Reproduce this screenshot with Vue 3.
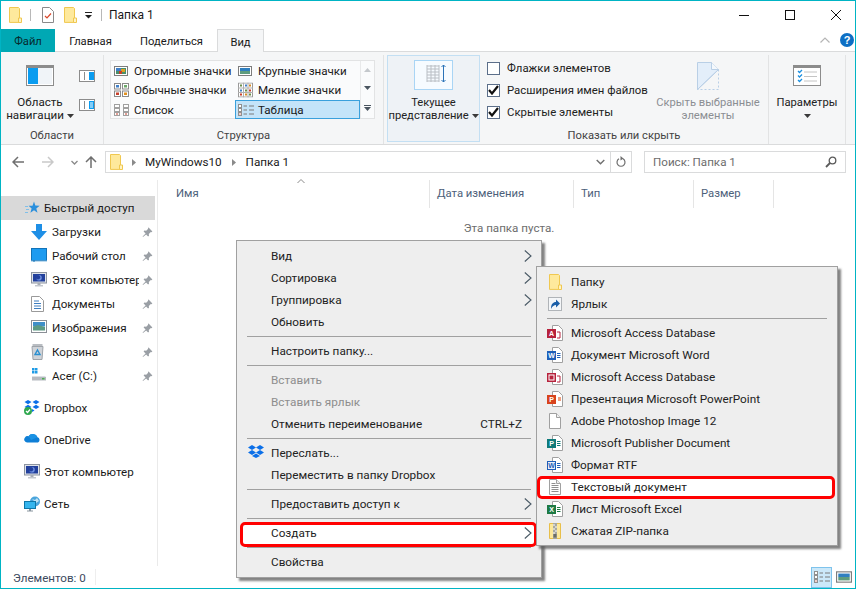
<template>
  <div class="window">
    <!-- набор иконок -->
    <svg class="defs" width="0" height="0">
      <symbol id="folder" viewBox="0 0 13 16">
        <path d="M.5.5h9l1 1v13.900H.5z" fill="#fee99c" stroke="#f0c850"/>
        <path d="M9.500 11h3v4.500h-3z" fill="#fff3c4" stroke="#f0c850"/>
      </symbol>
      <symbol id="pin" viewBox="0 0 11 11">
        <path d="M6.600.6l3.800 3.800-1 .8-.6-.3-2 2 .2 1.900-.9.700-2-2L1 10l-.4-.4 3-3.200-2-2 .8-.9 1.800.2 2-2-.3-.6z" fill="#9a9fa5"/>
      </symbol>
      <symbol id="v-huge" viewBox="0 0 14 10">
        <rect x=".5" y=".5" width="13" height="9" fill="#fff" stroke="#7d7d7d"/>
        <rect x="2" y="2" width="10" height="6" fill="#4a8f6a"/>
        <rect x="2" y="2" width="5" height="3" fill="#3f7fc8"/>
        <rect x="7" y="3" width="4" height="3" fill="#e0a020"/>
        <rect x="5" y="5" width="3" height="3" fill="#c8402c"/>
      </symbol>
      <symbol id="v-large" viewBox="0 0 14 10">
        <rect x=".5" y=".5" width="13" height="9" fill="#fff" stroke="#7d7d7d"/>
        <rect x="2" y="2" width="10" height="3" fill="#2f7fc0"/>
        <rect x="2" y="5" width="10" height="3" fill="#5e9c7e"/>
      </symbol>
      <symbol id="v-medium" viewBox="0 0 15 14">
        <g fill="#fff" stroke="#8a8a8a"><rect x=".5" y=".5" width="6" height="5.500"/><rect x="8.500" y=".5" width="6" height="5.500"/><rect x=".5" y="8" width="6" height="5.500"/><rect x="8.500" y="8" width="6" height="5.500"/></g>
        <rect x="2" y="2" width="3" height="2.500" fill="#3f7fc8"/><rect x="10" y="2" width="3" height="2.500" fill="#6ba86a"/><rect x="2" y="9.500" width="3" height="2.500" fill="#c8402c"/><rect x="10" y="9.500" width="3" height="2.500" fill="#e09020"/>
      </symbol>
      <symbol id="v-small" viewBox="0 0 15 15">
        <rect x=".5" y=".5" width="14" height="14" fill="#fff" stroke="#9a9a9a"/>
        <path d="M5.500 0v15M10 0v15M0 5.500h15M0 10h15" stroke="#b0b0b0"/>
        <g fill="#6a8f4a"><rect x="2" y="2" width="2" height="2"/><rect x="7" y="7" width="2" height="2"/><rect x="11" y="11" width="2" height="2"/></g>
        <g fill="#3f7fc8"><rect x="7" y="2" width="2" height="2"/><rect x="2" y="7" width="2" height="2"/></g>
        <g fill="#d88a20"><rect x="11" y="2" width="2" height="2"/><rect x="7" y="11" width="2" height="2"/></g>
        <g fill="#c8402c"><rect x="2" y="11" width="2" height="2"/><rect x="11" y="7" width="2" height="2"/></g>
      </symbol>
      <symbol id="v-list" viewBox="0 0 15 12">
        <g fill="#fff" stroke="#a0a0a0"><rect x=".5" y=".5" width="5" height="3"/><rect x=".5" y="4.500" width="5" height="3"/><rect x=".5" y="8.500" width="5" height="3"/><rect x="9.500" y=".5" width="5" height="3"/><rect x="9.500" y="4.500" width="5" height="3"/><rect x="9.500" y="8.500" width="5" height="3"/></g>
        <rect x="2" y="9.500" width="2" height="1" fill="#c8402c"/><rect x="11" y="9.500" width="2" height="1" fill="#c8402c"/>
      </symbol>
      <symbol id="v-table" viewBox="0 0 16 12">
        <g fill="#fff" stroke="#909090"><rect x=".5" y=".5" width="3" height="3"/><rect x=".5" y="4.500" width="3" height="3"/><rect x=".5" y="8.500" width="3" height="3"/></g>
        <path d="M5.500 2H9M11 2h5M5.500 6H9M11 6h5M5.500 10H9M11 10h5" stroke="#7a7a7a"/>
        <rect x="1.500" y="9.500" width="1" height="1" fill="#c8402c"/>
      </symbol>
      <symbol id="star" viewBox="0 0 15 14">
        <path d="M9 .5l1.300 4 4.400.2-3.400 2.700 1.200 4.300L9 9.300l-3.600 2.400 1.200-4.300-3-2.700h3.900z" fill="#2a8fdc"/>
        <path d="M0 5.500h3M1 8.500h3M0 11.500h3" stroke="#7fbfe8"/>
      </symbol>
      <symbol id="down" viewBox="0 0 16 16">
        <path d="M5 0h6v7h5l-8 9-8-9h5z" fill="#1e8fe6"/>
      </symbol>
      <symbol id="desktop" viewBox="0 0 16 14">
        <rect x=".5" y=".5" width="15" height="12" fill="#1d9bf0" stroke="#1273b8"/>
        <path d="M0 13h16" stroke="#7fb8e0"/><path d="M2 13h2" stroke="#1273b8"/>
      </symbol>
      <symbol id="pc" viewBox="0 0 16 15">
        <rect x=".5" y=".5" width="15" height="10.500" fill="#dfe3ea" stroke="#8d94a0"/>
        <rect x="2" y="2" width="12" height="7.500" fill="#22409c"/>
        <circle cx="8" cy="5.700" r="2.800" fill="#6f8fe0"/><circle cx="7" cy="5.300" r="2.200" fill="#22409c"/>
        <path d="M6.500 11h3v2h-3z" fill="#a8adb5"/><path d="M4 13h8v1.500H4z" fill="#c4c8ce"/>
      </symbol>
      <symbol id="docs" viewBox="0 0 13 16">
        <path d="M.5.5h8l4 4v11H.5z" fill="#fff" stroke="#9a9a9a"/>
        <path d="M3 5h5M3 7.500h7M3 10h7M3 12.500h7" stroke="#3f7fc0"/>
      </symbol>
      <symbol id="pics" viewBox="0 0 16 13">
        <rect x=".5" y=".5" width="15" height="12" fill="#fff" stroke="#8a8f96"/>
        <rect x="2" y="2" width="12" height="4.500" fill="#3f8fc8"/>
        <path d="M2 6.500l5-1.500 7 2v3.500H2z" fill="#5c9a84"/>
      </symbol>
      <symbol id="bin" viewBox="0 0 13 16">
        <path d="M1 2.500h11L11 15.500H2z" fill="#cfd3d8" stroke="#9ea3a9"/>
        <path d="M1.500 1h10" stroke="#b9bdc2" stroke-width="2"/>
        <path d="M6.500 6l2.500 4.500H4z" fill="none" stroke="#2a8fd0" stroke-width="1.400"/>
      </symbol>
      <symbol id="drive" viewBox="0 0 16 14">
        <g fill="#1e9be6"><rect x="1" y="0" width="2.500" height="2.500"/><rect x="4" y="0" width="2.500" height="2.500"/><rect x="1" y="3" width="2.500" height="2.500"/><rect x="4" y="3" width="2.500" height="2.500"/></g>
        <path d="M1 9h14v3.500H1z" fill="#b6bac0"/><path d="M1 8h13l1 1H1z" fill="#dcdfe3"/><rect x="11" y="10" width="2.500" height="1.500" fill="#4caf50"/>
      </symbol>
      <symbol id="dropbox" viewBox="0 0 16 15">
        <g fill="#0b6fe8"><path d="M4 0l3.500 2L4 4.300.5 2z"/><path d="M12 0l3.500 2L12 4.300 8.500 2z"/><path d="M4 4.700l3.500 2.200L4 9 .5 6.900z"/><path d="M12 4.700l3.500 2.200L12 9 8.500 6.900z"/></g>
        <path d="M8 9l2.500 1.600L8 12z" fill="#0b6fe8"/>
        <circle cx="4" cy="11" r="4" fill="#2fa84f"/><path d="M2 11l1.500 1.500L6 9.500" fill="none" stroke="#fff" stroke-width="1.300"/>
      </symbol>
      <symbol id="onedrive" viewBox="0 0 17 11">
        <path d="M3.500 10.500A3 3 0 0 1 1 5.500a3 3 0 0 1 3.500-1.200 5 5 0 0 1 9 1 2.800 2.800 0 0 1 .5 5.200z" fill="#0f7fd6"/>
        <path d="M4.500 4.300a5 5 0 0 1 9 1L7 8z" fill="#1a92e4"/>
      </symbol>
      <symbol id="net" viewBox="0 0 17 16">
        <circle cx="11" cy="5.500" r="5" fill="#4aa5dc"/><path d="M8 3l3 1 2-2 2 3-3 2z" fill="#bfe2f4"/>
        <rect x=".5" y="5.500" width="11" height="7" fill="#35b5ee" stroke="#0f77a8"/>
        <path d="M5 13h2v1.500H5zM3 14.500h6v1H3z" fill="#8a96a0"/>
      </symbol>
      <symbol id="shortcut" viewBox="0 0 14 14">
        <rect x=".5" y=".5" width="13" height="13" fill="#f4f6f8" stroke="#b0b4b8"/>
        <path d="M3 12c0-5 2-7 5-7V2.500l4 4-4 4V8c-2 0-3.500 1-5 4z" fill="#1b5fa8"/>
      </symbol>
      <symbol id="page" viewBox="0 0 12 16">
        <path d="M.5.5h7l4 4v11H.5z" fill="#fff" stroke="#a0a0a0"/>
        <path d="M7.500.5v4h4" fill="#f0f0f0" stroke="#a0a0a0"/>
      </symbol>
      <symbol id="txt" viewBox="0 0 12 16">
        <path d="M.5.5h7l4 4v11H.5z" fill="#fff" stroke="#a0a0a0"/>
        <path d="M7.500.5v4h4" fill="#f0f0f0" stroke="#a0a0a0"/>
        <path d="M2.500 4.500h4M2.500 6.500h7M2.500 8.500h7M2.500 10.500h7M2.500 12.500h7" stroke="#8f8f8f"/>
      </symbol>
      <symbol id="zip" viewBox="0 0 12 16">
        <path d="M.5.5h11v15H.5z" fill="#fde89a" stroke="#e8bf4a"/>
        <rect x="4" y="0" width="4" height="16" fill="#a8a8a0"/>
        <path d="M4 2h2M6 4h2M4 6h2M6 8h2M4 10h2" stroke="#fff"/>
        <rect x="4.500" y="11" width="3" height="3.500" fill="#6d6d66"/>
      </symbol>
      <symbol id="access" viewBox="0 0 16 16">
        <path d="M5.500.5h6l4 4v11h-10z" fill="#fff" stroke="#a0a0a0"/>
        <path d="M10 7h3v6h-3" fill="none" stroke="#b7223c"/>
        <rect x="0" y="4" width="9" height="9" fill="#b7223c"/>
      </symbol>
      <symbol id="word" viewBox="0 0 16 16">
        <path d="M5.500.5h6l4 4v11h-10z" fill="#fff" stroke="#a0a0a0"/>
        <path d="M10 6.500h3.500M10 8.500h3.500M10 10.500h3.500" stroke="#1f5fb8"/>
        <rect x="0" y="4" width="9" height="9" fill="#1f5fb8"/>
      </symbol>
      <symbol id="access2" viewBox="0 0 16 16">
        <path d="M5.500.5h6l4 4v11h-10z" fill="#fff" stroke="#a0a0a0"/>
        <path d="M10 7h3v6h-3" fill="none" stroke="#b7223c"/>
        <rect x="0" y="4" width="9" height="9" fill="#b7223c"/>
        <rect x="2" y="6" width="5" height="5" fill="none" stroke="#fff"/>
      </symbol>
      <symbol id="ppt" viewBox="0 0 16 16">
        <path d="M5.500.5h6l4 4v11h-10z" fill="#fff" stroke="#a0a0a0"/>
        <path d="M11 6h3v4h-3z" fill="#f0a080"/>
        <rect x="0" y="4" width="9" height="9" fill="#d8431c"/>
      </symbol>
      <symbol id="pub" viewBox="0 0 16 16">
        <path d="M5.500.5h6l4 4v11h-10z" fill="#fff" stroke="#a0a0a0"/>
        <path d="M10 6.500h3.500M10 8.500h3.500M10 10.500h3.500" stroke="#0e7a7a"/>
        <rect x="0" y="4" width="9" height="9" fill="#0e7a7a"/>
      </symbol>
      <symbol id="rtf" viewBox="0 0 16 16">
        <path d="M5.500.5h6l4 4v11h-10z" fill="#fff" stroke="#a0a0a0"/>
        <path d="M10 6.500h3.500M10 8.500h3.500M10 10.500h3.500" stroke="#1f5fb8"/>
        <rect x=".5" y="4.500" width="8" height="8" fill="#e8f0fa" stroke="#1f5fb8"/>
      </symbol>
      <symbol id="excel" viewBox="0 0 16 16">
        <path d="M5.500.5h6l4 4v11h-10z" fill="#fff" stroke="#a0a0a0"/>
        <path d="M10 6.500h3.500M10 8.500h3.500M10 10.500h3.500" stroke="#1d7a44"/>
        <rect x="0" y="4" width="9" height="9" fill="#1d7a44"/>
      </symbol>
      <symbol id="chev" viewBox="0 0 8 12">
        <path d="M.8.5L7 6 .8 11.500" fill="none" stroke="#4a5a66" stroke-width="1.100"/>
      </symbol>
      <symbol id="caret" viewBox="0 0 7 4"><path d="M0 0h7L3.500 4z" fill="#3a3a3a"/></symbol>
    </svg>

    <header class="titlebar">
      <svg class="ico folder-s"><use href="#folder"/></svg>
      <span class="tsep"></span>
      <svg class="qa-doc" viewBox="0 0 12 16" width="12" height="16">
        <path d="M.5.5h7l4 4v11H.5z" fill="#fff" stroke="#8a8a8a"/>
        <path d="M3 9l2 2 4-4.500" fill="none" stroke="#d9482b" stroke-width="1.200"/>
      </svg>
      <svg class="ico folder-s qa-f"><use href="#folder"/></svg>
      <svg class="qa-drop" width="7" height="7" viewBox="0 0 7 7"><path d="M0 0h7v1H0zM0 3h7L3.500 6.500z" fill="#222"/></svg>
      <span class="tsep second"></span>
      <span class="ttl">Папка 1</span>
      <div class="winbtns">
        <svg width="10" height="10" viewBox="0 0 10 10"><path d="M0 5.500h10" stroke="#111"/></svg>
        <svg width="10" height="10" viewBox="0 0 10 10"><rect x=".5" y=".5" width="9" height="9" fill="none" stroke="#111"/></svg>
        <svg width="10" height="10" viewBox="0 0 10 10"><path d="M0 0l10 10M10 0L0 10" stroke="#111"/></svg>
      </div>
    </header>

    <nav class="tabs">
      <span class="tab file">Файл</span>
      <span class="tab home">Главная</span>
      <span class="tab share">Поделиться</span>
      <span class="tab view">Вид</span>
      <svg class="collapse" width="10" height="6" viewBox="0 0 10 6"><path d="M.5 5.500L5 1l4.500 4.500" fill="none" stroke="#b5b5b5" stroke-width="1.200"/></svg>
      <span class="help">?</span>
    </nav>

    <section class="ribbon">
      <div class="grp g-areas">
        <div class="grp-body areas">
          <div class="bigbtn">
            <svg class="bigico" width="28" height="21" viewBox="0 0 28 21">
              <rect x=".5" y=".5" width="27" height="20" fill="#fff" stroke="#8c8c8c"/>
              <rect x="1" y="1" width="26" height="2" fill="#8c8c8c"/>
              <rect x="2" y="3" width="10" height="16" fill="#0a9cf0"/>
              <rect x="12" y="3" width="14" height="16" fill="#f0f4f8"/>
            </svg>
            <span class="lbl">Область<br>навигации <svg class="car" width="7" height="4"><use href="#caret"/></svg></span>
          </div>
          <div class="panes">
            <svg width="16" height="12" viewBox="0 0 16 12"><rect x=".5" y=".5" width="15" height="11" fill="#fff" stroke="#8c8c8c"/><path d="M5.500 2v8" stroke="#8c8c8c"/><rect x="10" y="2" width="5" height="8" fill="#0a9cf0"/></svg>
            <svg width="16" height="12" viewBox="0 0 16 12"><rect x=".5" y=".5" width="15" height="11" fill="#fff" stroke="#8c8c8c"/><path d="M5.500 2v8" stroke="#8c8c8c"/><rect x="10" y="2" width="5" height="8" fill="#0a9cf0"/><path d="M11 4h3M11 6h3M11 8h3" stroke="#fff"/></svg>
          </div>
        </div>
        <div class="grp-label">Области</div>
      </div>

      <div class="grp g-layout">
        <div class="grp-body layout">
          <div class="gallery">
            <div class="gal-grid">
              <div v-for="v in views" :key="v.label" class="gal-item" :class="{ active: v.active }">
                <svg class="gal-ico" :width="v.w" :height="v.h"><use :href="'#' + v.icon"/></svg>
                <span>{{ v.label }}</span>
              </div>
            </div>
            <div class="gal-scroll">
              <svg width="7" height="4"><path d="M0 4h7L3.500 0z" fill="#c4c8cc"/></svg>
              <svg width="7" height="4"><path d="M0 0h7L3.500 4z" fill="#4a5560"/></svg>
              <svg width="7" height="6"><path d="M0 0h7v1H0zM0 2h7L3.500 6z" fill="#4a5560"/></svg>
            </div>
          </div>
        </div>
        <div class="grp-label">Структура</div>
      </div>

      <div class="grp g-current">
        <div class="cur-ico">
          <svg width="39" height="30" viewBox="0 0 39 30">
            <rect x=".5" y=".5" width="38" height="29" fill="#f6fbff" stroke="#a9d5f5"/>
            <g stroke="#b9bec4"><path d="M13 6h12M13 9h12M13 12h12M13 15h12M13 18h12M13 21h12"/><path d="M13 5v17M17 5v17M21 5v17M25 5v17"/></g>
            <path d="M29.500 5v17M27.500 7l2-2 2 2M27.500 20l2 2 2-2" fill="none" stroke="#2b73b8"/>
          </svg>
        </div>
        <span class="lbl">Текущее<br>представление <svg class="car" width="7" height="4"><use href="#caret"/></svg></span>
      </div>

      <div class="grp g-show">
        <div class="grp-body show">
          <div class="checks">
            <label v-for="c in checks" :key="c.label" class="chk">
              <span class="box">
                <svg v-if="c.on" width="11" height="10" viewBox="0 0 11 10"><path d="M1 5l3 3.500L10 1" fill="none" stroke="#111" stroke-width="2.200"/></svg>
              </span>
              <span class="chk-text">{{ c.label }}</span>
            </label>
          </div>
          <div class="hide-btn">
            <svg width="22" height="28" viewBox="0 0 22 28">
              <path d="M.5 27.500V.5h14l7 7z" fill="#e3eefa" stroke="#b9cfe6"/>
              <path d="M14.500.5v7h7" fill="#f4f8fc" stroke="#b9cfe6"/>
              <path d="M.5 27.500L21.500 7.500" stroke="#b9cfe6"/>
              <path d="M21.500 7.500v20H.5" fill="none" stroke="#b9cfe6" stroke-dasharray="2 2"/>
            </svg>
            <span class="lbl dim">Скрыть выбранные<br>элементы</span>
          </div>
        </div>
        <div class="grp-label">Показать или скрыть</div>
      </div>

      <div class="grp g-params">
        <svg width="28" height="21" viewBox="0 0 28 21">
          <rect x=".5" y=".5" width="27" height="20" fill="#fff" stroke="#8c8c8c"/>
          <rect x="1" y="1" width="26" height="2" fill="#8c8c8c"/>
          <g fill="none" stroke="#1a8fe0" stroke-width="1.300"><path d="M5 6l1.500 1.500L9 5"/><path d="M5 10.500L6.500 12 9 9.500"/><path d="M5 15l1.500 1.500L9 14"/></g>
          <path d="M11 7h13M11 11.500h13M11 16h13" stroke="#c4c4c4"/>
        </svg>
        <span class="lbl">Параметры</span>
        <svg class="car-p" width="7" height="4"><use href="#caret"/></svg>
      </div>
    </section>

    <div class="addr-row">
      <svg width="12" height="12" viewBox="0 0 12 12"><path d="M6 1L1 6l5 5M1 6h11" fill="none" stroke="#6f6f6f" stroke-width="1.500"/></svg>
      <svg class="fwd" width="12" height="12" viewBox="0 0 12 12"><path d="M6 1l5 5-5 5M11 6H0" fill="none" stroke="#c9c9c9" stroke-width="1.500"/></svg>
      <svg class="hist" width="7" height="5" viewBox="0 0 7 5"><path d="M.5 1l3 3 3-3" fill="none" stroke="#8a8a8a" stroke-width="1.300"/></svg>
      <svg class="upb" width="12" height="12" viewBox="0 0 12 12"><path d="M1 6l5-5 5 5M6 1v11" fill="none" stroke="#6f6f6f" stroke-width="1.500"/></svg>
      <div class="addr">
        <svg class="ico folder-s"><use href="#folder"/></svg>
        <svg class="crumb first" width="4" height="7"><path d="M0 0l4 3.500L0 7z" fill="#8a8a8a"/></svg>
        <span>MyWindows10</span>
        <svg class="crumb" width="4" height="7"><path d="M0 0l4 3.500L0 7z" fill="#8a8a8a"/></svg>
        <span>Папка 1</span>
        <svg class="addr-drop" width="9" height="6" viewBox="0 0 9 6"><path d="M.7 1l3.800 3.800L8.300 1" fill="none" stroke="#6f6f6f" stroke-width="1.400"/></svg>
        <span class="addr-sep"></span>
        <svg class="refresh" width="10" height="12" viewBox="0 0 10 12"><path d="M3 2.800a4 4 0 1 0 4 0" fill="none" stroke="#6f6f6f" stroke-width="1.200"/><path d="M4.500 0l3 2.500-3 2z" fill="#6f6f6f"/></svg>
      </div>
      <div class="search">
        <span>Поиск: Папка 1</span>
        <svg width="12" height="12" viewBox="0 0 12 12"><circle cx="7.500" cy="4.500" r="3.300" fill="none" stroke="#5a5a5a" stroke-width="1.300"/><path d="M5 7L1 11" stroke="#5a5a5a" stroke-width="1.800"/></svg>
      </div>
    </div>

    <div class="main">
      <aside class="side">
        <div class="side-row top sel">
          <svg width="15" height="14"><use href="#star"/></svg>
          <span class="side-text">Быстрый доступ</span>
        </div>
        <div v-for="q in quick" :key="q.label" class="side-row sub">
          <svg :width="q.w" :height="q.h" class="side-ico"><use :href="'#' + q.icon"/></svg>
          <span class="side-text">{{ q.label }}</span>
          <svg class="pin" width="11" height="11"><use href="#pin"/></svg>
        </div>
        <div v-for="r in roots" :key="r.label" class="side-row top root">
          <svg :width="r.w" :height="r.h" class="root-ico"><use :href="'#' + r.icon"/></svg>
          <span class="side-text">{{ r.label }}</span>
        </div>
      </aside>
      <div class="content">
        <div class="cols">
          <svg class="sort" width="8" height="4" viewBox="0 0 8 4"><path d="M.5 4L4 .5 7.500 4" fill="none" stroke="#8a8a8a"/></svg>
          <div class="col c-name">Имя</div>
          <div class="col c-date">Дата изменения</div>
          <div class="col c-type">Тип</div>
          <div class="col c-size">Размер</div>
        </div>
        <div class="empty">Эта папка пуста.</div>
      </div>
    </div>

    <footer class="status">
      <span class="count">Элементов: 0</span>
      <div class="status-btns">
        <span class="st-btn on"><svg width="16" height="12"><use href="#v-table"/></svg></span>
        <span class="st-btn"><svg width="16" height="12"><use href="#v-large"/></svg></span>
      </div>
    </footer>

    <!-- контекстное меню поверх окна -->
    <div class="menu main-menu">
      <template v-for="(m, i) in mainMenu" :key="i">
        <div v-if="m.sep" class="msep"></div>
        <div v-else class="mitem" :class="{ off: m.off, mark: m.mark }">
          <svg v-if="m.icon" class="m-drop" width="16" height="13" viewBox="0 0 16 13">
            <g fill="#0b6fe8"><path d="M4 0l4 2.500L4 5 0 2.500z"/><path d="M12 0l4 2.500L12 5 8 2.500z"/><path d="M4 5l4 2.500L4 10 0 7.500z"/><path d="M12 5l4 2.500L12 10 8 7.500z"/><path d="M8 8.500l4 2.500-4 2-4-2z"/></g>
          </svg>
          <span class="mtext">{{ m.label }}</span>
          <span v-if="m.key" class="mkey">{{ m.key }}</span>
          <svg v-if="m.more" class="mchev" width="8" height="12"><use href="#chev"/></svg>
        </div>
      </template>
    </div>

    <div class="menu sub-menu">
      <template v-for="(m, i) in newMenu" :key="i">
        <div v-if="m.sep" class="msep"></div>
        <div v-else class="mitem" :class="{ mark: m.mark }">
          <svg class="mico" :width="m.w || 16" height="16" :style="{ marginLeft: (m.x || 0) + 'px' }">
            <use :href="'#' + m.icon"/>
            <text v-if="m.letter" x="4.500" y="11.300" class="mini" :class="{ blue: m.blue }">{{ m.letter }}</text>
          </svg>
          <span class="mtext">{{ m.label }}</span>
        </div>
      </template>
    </div>
  </div>
</template>

<script setup>
const views = [
  { label: 'Огромные значки', icon: 'v-huge', w: 14, h: 10 },
  { label: 'Крупные значки', icon: 'v-large', w: 14, h: 10 },
  { label: 'Обычные значки', icon: 'v-medium', w: 15, h: 14 },
  { label: 'Мелкие значки', icon: 'v-small', w: 15, h: 15 },
  { label: 'Список', icon: 'v-list', w: 15, h: 12 },
  { label: 'Таблица', icon: 'v-table', w: 16, h: 12, active: true },
]

const checks = [
  { label: 'Флажки элементов', on: false },
  { label: 'Расширения имен файлов', on: true },
  { label: 'Скрытые элементы', on: true },
]

const quick = [
  { label: 'Загрузки', icon: 'down', w: 16, h: 16 },
  { label: 'Рабочий стол', icon: 'desktop', w: 16, h: 14 },
  { label: 'Этот компьютер', icon: 'pc', w: 16, h: 15 },
  { label: 'Документы', icon: 'docs', w: 13, h: 16 },
  { label: 'Изображения', icon: 'pics', w: 16, h: 13 },
  { label: 'Корзина', icon: 'bin', w: 13, h: 16 },
  { label: 'Acer (C:)', icon: 'drive', w: 16, h: 14 },
]

const roots = [
  { label: 'Dropbox', icon: 'dropbox', w: 16, h: 15 },
  { label: 'OneDrive', icon: 'onedrive', w: 17, h: 11 },
  { label: 'Этот компьютер', icon: 'pc', w: 16, h: 15 },
  { label: 'Сеть', icon: 'net', w: 17, h: 16 },
]

const mainMenu = [
  { label: 'Вид', more: true },
  { label: 'Сортировка', more: true },
  { label: 'Группировка', more: true },
  { label: 'Обновить' },
  { sep: true },
  { label: 'Настроить папку...' },
  { sep: true },
  { label: 'Вставить', off: true },
  { label: 'Вставить ярлык', off: true },
  { label: 'Отменить переименование', key: 'CTRL+Z' },
  { sep: true },
  { label: 'Переслать...', icon: true },
  { label: 'Переместить в папку Dropbox' },
  { sep: true },
  { label: 'Предоставить доступ к', more: true },
  { sep: true },
  { label: 'Создать', more: true, mark: true },
  { sep: true },
  { label: 'Свойства' },
]

const newMenu = [
  { label: 'Папку', icon: 'folder', w: 13, x: 2 },
  { label: 'Ярлык', icon: 'shortcut', w: 14, x: 1 },
  { sep: true },
  { label: 'Microsoft Access Database', icon: 'access', letter: 'A' },
  { label: 'Документ Microsoft Word', icon: 'word', letter: 'W' },
  { label: 'Microsoft Access Database', icon: 'access2' },
  { label: 'Презентация Microsoft PowerPoint', icon: 'ppt', letter: 'P' },
  { label: 'Adobe Photoshop Image 12', icon: 'page', w: 12, x: 2 },
  { label: 'Microsoft Publisher Document', icon: 'pub', letter: 'P' },
  { label: 'Формат RTF', icon: 'rtf', letter: 'W', blue: true },
  { label: 'Текстовый документ', icon: 'txt', w: 12, x: 2, mark: true },
  { label: 'Лист Microsoft Excel', icon: 'excel', letter: 'X' },
  { label: 'Сжатая ZIP-папка', icon: 'zip', w: 12, x: 2 },
]
</script>

<style>
html, body { margin: 0; background: #fff; }
</style>

<style scoped>
.window {
  position: relative; width: 856px; height: 589px; box-sizing: border-box;
  border: 1px solid #00b4c4; display: flex; flex-direction: column; overflow: hidden;
  font-family: Roboto, "Noto Sans", sans-serif; font-size: 12px; color: #1a1a1a; background: #fff;
}
.defs { position: absolute; }
.mini { font: bold 7px "Liberation Sans", sans-serif; fill: #fff; text-anchor: middle; }
.mini.blue { fill: #1f5fb8; }

/* заголовок */
.titlebar { height: 28px; display: flex; align-items: center; padding-left: 8px; flex-shrink: 0; }
.folder-s { width: 13px; height: 16px; }
.tsep { width: 1px; height: 12px; background: #b8b8b8; margin: 0 0 0 8px; }
.tsep.second { margin-left: 9px; }
.qa-doc { margin-left: 11px; }
.qa-f { margin-left: 10px; }
.qa-drop { margin-left: 8px; }
.ttl { margin-left: 7px; font-size: 12px; }
.winbtns { margin-left: auto; display: flex; gap: 36px; padding-right: 14px; }

/* вкладки */
.tabs { height: 23px; display: flex; align-items: stretch; position: relative; flex-shrink: 0; font-size: 11.2px; }
.tab { display: flex; align-items: center; justify-content: center; border-bottom: 1px solid #dadbdc; box-sizing: border-box; padding-top: 2px; }
.file { width: 54px; background: #00a8b4; border-color: #00a8b4; color: #062a2e; }
.home { width: 71px; }
.share { width: 91px; }
.view { width: 47px; background: #f5f6f7; border: 1px solid #dadbdc; border-bottom: 0; }
.tabs::after { content: ""; flex: 1; border-bottom: 1px solid #dadbdc; }
.collapse { position: absolute; right: 25px; top: 8px; }
.help {
  position: absolute; right: 1px; top: 4px; width: 14px; height: 14px; border-radius: 50%;
  background: #0d6fc4; color: #fff; font: bold 11px/14px "Liberation Sans", sans-serif; text-align: center;
}

/* лента */
.ribbon { height: 93px; box-sizing: border-box; background: #f5f6f7; border-bottom: 1px solid #dadbdc; display: flex; flex-shrink: 0; padding-top: 3px; font-size: 11.2px; }
.grp { display: flex; flex-direction: column; border-right: 1px solid #e2e3e4; box-sizing: border-box; }
.grp-body { flex: 1; display: flex; min-height: 0; }
.grp-label { height: 18px; line-height: 20px; text-align: center; color: #444; }
.lbl { display: block; line-height: 13px; text-align: center; color: #222; white-space: nowrap; }
.lbl.dim { color: #8b8e93; }
.car { vertical-align: middle; }
.g-areas { width: 103px; }
.areas { padding: 10px 0 0 0; font-size: 11.6px; }
.bigbtn { width: 78px; display: flex; flex-direction: column; align-items: center; }
.bigico { margin-bottom: 10px; }
.panes { display: flex; flex-direction: column; gap: 17px; padding: 5px 0 0 0; }
.g-layout { width: 280px; margin-right: 3px; }
.layout { padding: 5px 0 0 6px; font-size: 11.6px; }
.gallery { width: 265px; height: 59px; box-sizing: border-box; display: flex; background: #fafbfc; border: 1px solid #e2e3e4; }
.gal-grid { width: 249px; display: grid; grid-template-columns: 124px 125px; grid-template-rows: 19px 20px 19px; }
.gal-item { display: flex; align-items: center; white-space: nowrap; box-sizing: border-box; border: 1px solid transparent; position: relative; padding-left: 22px; }
.gal-ico { position: absolute; left: 2px; top: 50%; transform: translateY(-50%); }
.gal-item.active { background: #c4e4f9; border-color: #3aa0dc; }
.gal-scroll { flex: 1; border-left: 1px solid #e8e9ea; display: grid; justify-items: center; align-items: center; }
.g-current { width: 93px; height: 87px; background: #eef2f6; border: 1px solid #c3dff3; align-items: center; }
.cur-ico { padding: 4px 0 6px; height: 30px; }
.cur-ico svg { display: block; }
.g-show { width: 289px; }
.show { padding: 5px 0 0 7px; }
.checks { width: 160px; display: flex; flex-direction: column; gap: 8px; padding-top: 1px; font-size: 11.4px; }
.chk { display: flex; align-items: center; gap: 7px; height: 14px; white-space: nowrap; color: #222; }
.box { width: 13px; height: 13px; box-sizing: border-box; border: 1px solid #5c6f8a; background: #fff; display: flex; align-items: center; justify-content: center; flex-shrink: 0; }
.hide-btn { width: 110px; display: flex; flex-direction: column; align-items: center; padding-top: 2px; margin-left: 6px; }
.hide-btn svg { margin-bottom: 6px; }
.g-params { width: 77px; align-items: center; padding-top: 10px; }
.g-params .lbl { margin-top: 10px; }
.car-p { margin-top: 5px; }

/* адресная строка */
.addr-row { height: 32px; box-sizing: border-box; display: flex; align-items: center; flex-shrink: 0; padding: 2px 0 0 11px; }
.fwd { margin-left: 18px; }
.hist { margin-left: 17px; }
.upb { margin-left: 7px; }
.addr {
  margin-left: 8px; width: 527px; height: 22px; box-sizing: border-box; border: 1px solid #dadbdc;
  display: flex; align-items: center; padding-left: 4px; font-size: 11.7px;
}
.addr .folder-s { margin-right: 9px; }
.crumb { margin-right: 10px; }
.crumb.first { margin-right: 9px; }
.addr span + .crumb { margin-left: 10px; }
.addr-drop { margin-left: auto; }
.addr-sep { width: 1px; align-self: stretch; background: #dadbdc; margin: 0 5px 0 5px; }
.refresh { margin-right: 5px; }
.search {
  margin-left: 12px; width: 202px; height: 22px; box-sizing: border-box; border: 1px solid #dadbdc;
  display: flex; align-items: center; justify-content: space-between; padding: 0 8px; color: #6d6d6d; font-size: 11.6px;
}

/* основная часть */
.main { flex: 1; display: flex; min-height: 0; }
.side { width: 157px; box-sizing: border-box; padding-top: 19px; position: relative; flex-shrink: 0; }
.side::after { content: ""; position: absolute; right: 0; top: 3px; bottom: 0; width: 1px; background: #eaeaea; }
.side-row { height: 24px; display: flex; align-items: center; position: relative; white-space: nowrap; overflow: hidden; }
.side-text { position: absolute; top: 4px; line-height: 16px; font-size: 11.6px; }
.top .side-text { left: 43px; }
.sub .side-text { left: 51px; width: 87px; overflow: hidden; }
.sel { background: #d9d9d9; width: 154px; }
.sel svg { margin-left: 24px; }
.side-ico { position: absolute; left: 30px; top: 4px; }
.root { margin-top: 8px; }
.root-ico { position: absolute; left: 23px; top: 4px; }
.pin { position: absolute; left: 141px; top: 7px; }
.content { flex: 1; position: relative; }
.cols { height: 25px; margin-top: 3px; position: relative; display: grid; grid-template-columns: 272px 144px 120px 80px; color: #4c607a; font-size: 11.3px; }
.col { border-right: 1px solid #e5e5e5; padding-left: 7px; line-height: 28px; box-sizing: border-box; }
.c-name { padding-left: 18px; }
.sort { position: absolute; left: 139px; top: -1px; }
.empty { text-align: center; color: #6d6d6d; width: 702px; margin-top: 16px; font-size: 11.6px; }

/* строка состояния */
.status { height: 22px; box-sizing: border-box; display: flex; align-items: center; padding: 0 0 0 12px; flex-shrink: 0; position: relative; color: #3c4a5e; font-size: 11.6px; }
.count { width: 82px; border-right: 1px solid #eee; padding-top: 2px; }
.status-btns { margin-left: auto; display: flex; gap: 1px; padding-right: 1px; }
.st-btn { width: 21px; height: 21px; display: flex; align-items: center; justify-content: center; box-sizing: border-box; }
.st-btn.on { background: #cbe8f9; border: 1px solid #7ec3ec; }

/* меню */
.menu {
  position: absolute; box-sizing: border-box; background: #eee; border: 1px solid #a0a0a0;
  box-shadow: 3px 3px 2px rgba(90, 90, 90, .75); padding: 4px 0 0; font-size: 11.75px;
}
.main-menu { left: 235px; top: 239px; width: 306px; height: 338px; }
.sub-menu { left: 535px; top: 265px; width: 302px; height: 280px; }
.mitem { height: 22px; box-sizing: border-box; display: flex; align-items: center; position: relative; color: #222; white-space: nowrap; }
.main-menu .mtext { margin-left: 34px; position: relative; }
.sub-menu .mtext { position: absolute; left: 34px; }
.off .mtext { color: #8d8d8d; }
.mkey { position: absolute; right: 19px; }
.mchev { position: absolute; left: 287px; top: 5px; }
.m-drop { position: absolute; left: 11px; top: 3px; }
.mico { position: absolute; left: 10px; top: 3px; }
.msep { height: 7px; position: relative; }
.msep::after { content: ""; position: absolute; top: 3px; height: 1px; left: 10px; background: #a0a0a0; }
.main-menu .msep::after { width: 284px; }
.sub-menu .msep::after { width: 280px; }
.mark::before {
  content: ""; position: absolute; box-sizing: border-box; background: #fff; border: 3px solid #f00; border-radius: 5px;
}
.main-menu .mark::before { left: 3px; top: 0; width: 297px; height: 25px; }
.sub-menu .mark::before { left: 0; top: 0; width: 298px; height: 23px; }
.mark > * { z-index: 1; }
</style>
